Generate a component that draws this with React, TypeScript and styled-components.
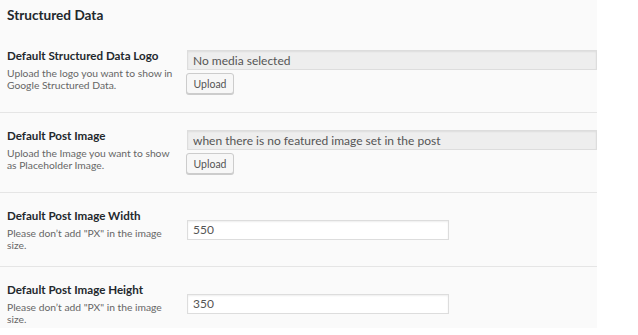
import React from 'react';
import styled, { createGlobalStyle } from 'styled-components';

const GlobalStyle = createGlobalStyle`
  html, body {
    margin: 0;
    padding: 0;
    background: #fff;
  }
  body {
    font-family: Lato, "Liberation Sans", sans-serif;
    color: #23282d;
  }
`;

type Field = {
  label: string;
  description: string[];
  kind: 'media' | 'text';
  value: string;
};

const fields: Field[] = [
  {
    label: 'Default Structured Data Logo',
    description: ['Upload the logo you want to show in', 'Google Structured Data.'],
    kind: 'media',
    value: 'No media selected'
  },
  {
    label: 'Default Post Image',
    description: ['Upload the Image you want to show', 'as Placeholder Image.'],
    kind: 'media',
    value: 'when there is no featured image set in the post'
  },
  {
    label: 'Default Post Image Width',
    description: ['Please don\u2019t add "PX" in the image', 'size.'],
    kind: 'text',
    value: '550'
  },
  {
    label: 'Default Post Image Height',
    description: ['Please don\u2019t add "PX" in the image', 'size.'],
    kind: 'text',
    value: '350'
  }
];

export default () => {
  return <Panel>
    <GlobalStyle />
    <Title>Structured Data</Title>
    {
      fields.map((f) => (
        <Row key={f.label}>
          <LabelCell>
            <Label>{f.label}</Label>
            <Description>
              {f.description.map((line) => <span key={line}>{line}</span>)}
            </Description>
          </LabelCell>
          {
            (f.kind === 'media')
              ? <MediaCell>
                  <MediaInput readOnly value={f.value} />
                  <UploadButton>Upload</UploadButton>
                </MediaCell>
              : <TextCell>
                  <TextInput readOnly value={f.value} />
                </TextCell>
          }
        </Row>
      ))
    }
  </Panel>;
}

const Panel = styled.div`
  width: 597px;
  height: 328px;
  overflow: hidden;
  background: #fafafa;
  padding-top: 6px;
  box-sizing: border-box;
`;

const Title = styled.h2`
  margin: 0 0 9px 0;
  padding-left: 7px;
  font-size: 13.6px;
  line-height: 18px;
  font-weight: 700;
  color: #23282d;
`;

const Row = styled.div`
  display: grid;
  grid-template-columns: 180px 1fr;
  padding-left: 7px;
  & + & {
    border-top: 1px solid #e5e5e5;
  }
`;

const LabelCell = styled.div`
  padding: 15px 0 15px 0;
`;

const Label = styled.div`
  font-size: 11.6px;
  line-height: 16px;
  font-weight: 700;
  color: #23282d;
  margin-bottom: 3px;
`;

const Description = styled.div`
  display: flex;
  flex-direction: column;
  font-size: 10.3px;
  line-height: 12px;
  color: #666;
`;

const MediaCell = styled.div`
  display: flex;
  flex-direction: column;
  align-items: flex-start;
  gap: 3px;
  padding: 17px 0 18px 0;
`;

const TextCell = styled.div`
  display: flex;
  align-items: center;
`;

const inputBase = `
  box-sizing: border-box;
  height: 20px;
  margin: 0;
  padding: 0 5px;
  border: 1px solid #ddd;
  box-shadow: inset 0 1px 2px rgba(0, 0, 0, 0.07);
  font-family: Lato, "Liberation Sans", sans-serif;
  font-size: 12px;
  color: #555;
  outline: none;
`;

const MediaInput = styled.input`
  ${inputBase}
  width: 410px;
  background: #eee;
`;

const TextInput = styled.input`
  ${inputBase}
  width: 262px;
  background: #fff;
`;

const UploadButton = styled.button`
  box-sizing: border-box;
  width: 48px;
  height: 21px;
  margin-left: -1px;
  padding: 0;
  border: 1px solid #ccc;
  border-radius: 3px;
  background: #f7f7f7;
  box-shadow: 0 1px 0 #ccc;
  font-family: Lato, "Liberation Sans", sans-serif;
  font-size: 10.5px;
  color: #555;
`;
